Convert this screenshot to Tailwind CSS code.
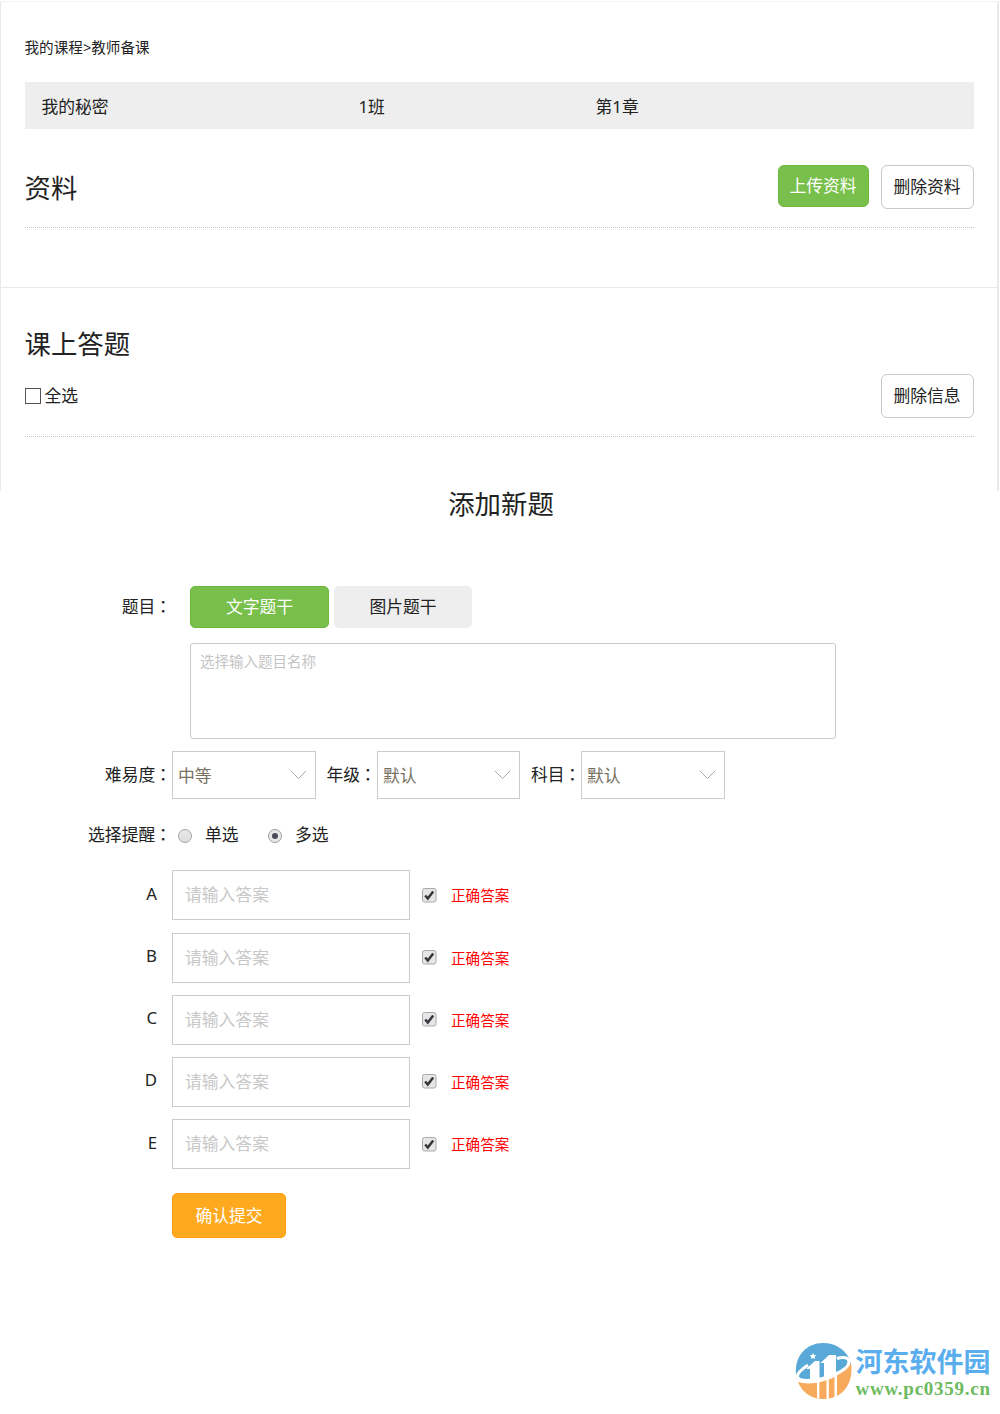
<!DOCTYPE html>
<html lang="zh-CN">
<head>
<meta charset="utf-8">
<title>教师备课</title>
<script src="https://cdn.jsdelivr.net/npm/@tailwindcss/browser@4"></script>
</head>
<body class="h-[1414px] w-[1000px] overflow-hidden bg-white font-['Noto_Sans','Noto_Sans_CJK_SC',sans-serif] text-[16.8px] leading-6 text-[#222]">
<div class="flex h-full flex-col">

<section class="mt-px mr-px flex h-[287px] flex-col border border-r-2 border-[#e9e9e9] border-t-[#f4f4f4] pr-[23.5px] pl-[23.5px]">
  <nav class="mt-[33px] h-6 text-[14.6px]">我的课程&gt;教师备课</nav>
  <div class="mt-[23px] flex h-[47px] items-center bg-[#eee] pt-[2px]">
    <span class="ml-[17px] w-[317px]">我的秘密</span>
    <span class="w-[237px]">1班</span>
    <span>第1章</span>
  </div>
  <div class="mt-9 flex h-[63px] items-start justify-between border-b border-dotted border-[#c4c4c4]">
    <h2 class="text-[26.4px] leading-[46px]">资料</h2>
    <div class="flex gap-3">
      <button class="h-[42px] w-[91px] rounded-md border border-[#6cb839] bg-[#78c04b] text-white">上传资料</button>
      <button class="h-11 w-[93px] rounded-md border border-[#c8c8c8] bg-white">删除资料</button>
    </div>
  </div>
</section>

<section class="mr-px flex h-[203px] flex-col border-r-2 border-l border-[#e9e9e9] pr-[23.5px] pl-[23.5px]">
  <h2 class="mt-9 h-10 text-[26.4px] leading-[41px]">课上答题</h2>
  <div class="mt-[10px] flex h-[63px] items-start justify-between border-b border-dotted border-[#c4c4c4]">
    <label class="flex h-[43px] items-center gap-1"><span class="size-4 border border-[#555]"></span><span>全选</span></label>
    <button class="h-11 w-[93px] rounded-md border border-[#c8c8c8] bg-white">删除信息</button>
  </div>
</section>

<h2 class="mt-[-7px] h-10 pl-[2px] text-center text-[26.4px] leading-10">添加新题</h2>

<form class="mt-[62px] flex flex-col">
  <div class="flex h-[42px] items-center">
    <span class="w-[190px] pr-[18px] text-right">题目<span class="inline-block w-[16.8px] text-left -indent-[0.5px] font-['Noto_Sans_CJK_TC',sans-serif] leading-none" lang="zh-TW">：</span></span>
    <button type="button" class="h-[42px] w-[139px] rounded-[5px] border border-[#6cb839] bg-[#78c04b] text-white">文字题干</button>
    <button type="button" class="ml-[5px] h-[42px] w-[138px] rounded-[5px] bg-[#eee]">图片题干</button>
  </div>
  <div class="mt-[15px] ml-[190px] h-24 w-[646px] rounded-[3px] border border-[#ccc] px-[9px] py-[5px] text-[14.5px] text-[#c4c4c4]">选择输入题目名称</div>

  <div class="mt-3 flex h-12 items-center">
    <span class="w-[172px] text-right">难易度<span class="inline-block w-[16.8px] text-left -indent-[0.5px] font-['Noto_Sans_CJK_TC',sans-serif] leading-none" lang="zh-TW">：</span></span>
    <div class="flex h-12 w-[144px] items-center justify-between border border-[#ccc] pr-2 pl-[5px] text-[#77705f]"><span class="pt-px">中等</span><svg class="h-[10px] w-[17px]" viewBox="0 0 17 10" fill="none" stroke="#aaa"><path d="M.8.8 8.5 8.5 16.2.8"/></svg></div>
    <span class="w-[61px] pl-[10.5px] whitespace-nowrap">年级<span class="inline-block w-[16.8px] text-left -indent-[0.5px] font-['Noto_Sans_CJK_TC',sans-serif] leading-none" lang="zh-TW">：</span></span>
    <div class="flex h-12 w-[143px] items-center justify-between border border-[#ccc] pr-2 pl-[5px] text-[#77705f]"><span class="pt-px">默认</span><svg class="h-[10px] w-[17px]" viewBox="0 0 17 10" fill="none" stroke="#aaa"><path d="M.8.8 8.5 8.5 16.2.8"/></svg></div>
    <span class="w-[61px] pl-[11px] whitespace-nowrap">科目<span class="inline-block w-[16.8px] text-left -indent-[0.5px] font-['Noto_Sans_CJK_TC',sans-serif] leading-none" lang="zh-TW">：</span></span>
    <div class="flex h-12 w-[144px] items-center justify-between border border-[#ccc] pr-2 pl-[5px] text-[#77705f]"><span class="pt-px">默认</span><svg class="h-[10px] w-[17px]" viewBox="0 0 17 10" fill="none" stroke="#aaa"><path d="M.8.8 8.5 8.5 16.2.8"/></svg></div>
  </div>

  <div class="mt-6 flex h-6 items-center">
    <span class="w-[172px] text-right">选择提醒<span class="inline-block w-[16.8px] text-left -indent-[0.5px] font-['Noto_Sans_CJK_TC',sans-serif] leading-none" lang="zh-TW">：</span></span>
    <span class="mt-[2px] ml-[6px] size-[14px] rounded-full border border-[#a5a5a5] bg-linear-to-b from-[#e8e8e8] to-[#ddd]"></span>
    <span class="ml-[13px] w-[63px]">单选</span>
    <span class="mt-[2px] flex size-[14px] items-center justify-center rounded-full border border-[#a0a0a0] bg-[#e8e8e8]"><span class="size-[6px] rounded-full bg-[#4a4d58]"></span></span>
    <span class="ml-[13px]">多选</span>
  </div>

  <div id="answers" class="mt-[23.4px] flex flex-col gap-[12.2px]"></div>

  <button type="button" class="mt-[23.6px] ml-[172px] h-[45px] w-[114px] rounded-[5px] border border-[#ff9f0f] bg-[#ffa91e] pt-[2px] text-white">确认提交</button>
</form>

<footer class="mt-auto mr-[9.5px] mb-[14px] flex h-[57px] justify-end gap-1">
  <svg class="h-[57px] w-[57px]" viewBox="0 0 57 57">
    <path fill="#59a9d8" d="M2 36C-3 17 9 0 28 0c12 0 21 6 26 15l2 6C49 30 34 35 22 37 14 38 6 39 2 36Z"/>
    <path fill="#f8aa5c" d="M3 39c10 3 25 1 36-5 9-5 14-9 17-14 3 20-8 36-28 36-12 0-21-7-25-17Z"/>
    <path fill="none" stroke="#fff" stroke-width="3" d="M13 22C-2 32 0 37 12 37.500c16 0 42-9 42-19 0-4-6-5-12-3"/>
    <path fill="#fff" d="M11 26 20 18h4.500v19L15 38V26ZM25.500 20 34 12h7v21l-6 3h-6V20Z"/>
    <path fill="#fff" d="M22 36h2.300v20L22 55ZM31.500 34h2.300v22h-2.300ZM39.500 31h2.500v22l-2.500 1Z"/>
    <path fill="#fff" d="m18 10 1 2.100 2.400.2-1.800 1.500.6 2.300-2.200-1.200-2.100 1.200.5-2.300-1.800-1.500 2.400-.2Z"/>
  </svg>
  <div class="w-[135px] whitespace-nowrap">
    <div class="mt-[2px] h-8 font-['Noto_Sans_CJK_SC',sans-serif] text-[27px] leading-8 font-bold text-[#5aaeee]">河东软件园</div>
    <div class="h-6 font-['Liberation_Serif',serif] text-[19px] leading-[24px] font-bold tracking-[0.75px] text-[#6dba5f]">www.pc0359.cn</div>
  </div>
</footer>
</div>
<script>
document.getElementById('answers').innerHTML = ['A','B','C','D','E'].map(function (letter) {
  return `<div class="flex h-[50px] items-center">
    <span class="w-[172px] pr-[15px] pb-[3px] text-right">${letter}</span>
    <span class="flex h-[50px] w-[238px] items-center border border-[#ccc] pl-3 text-[#c8c8c8]">请输入答案</span>
    <svg class="ml-3 h-[15px] w-[15px]" viewBox="0 0 15 15"><rect x=".5" y=".5" width="13.5" height="13.5" rx="2" fill="#e6e6e6" stroke="#aaa"/><path d="m3.200 7.500 2.600 3 5.400-7" fill="none" stroke="#38363a" stroke-width="2.500"/></svg>
    <span class="ml-[14px] text-[14.6px] text-[#f00]">正确答案</span>
  </div>`;
}).join('');
</script>
</body>
</html>
